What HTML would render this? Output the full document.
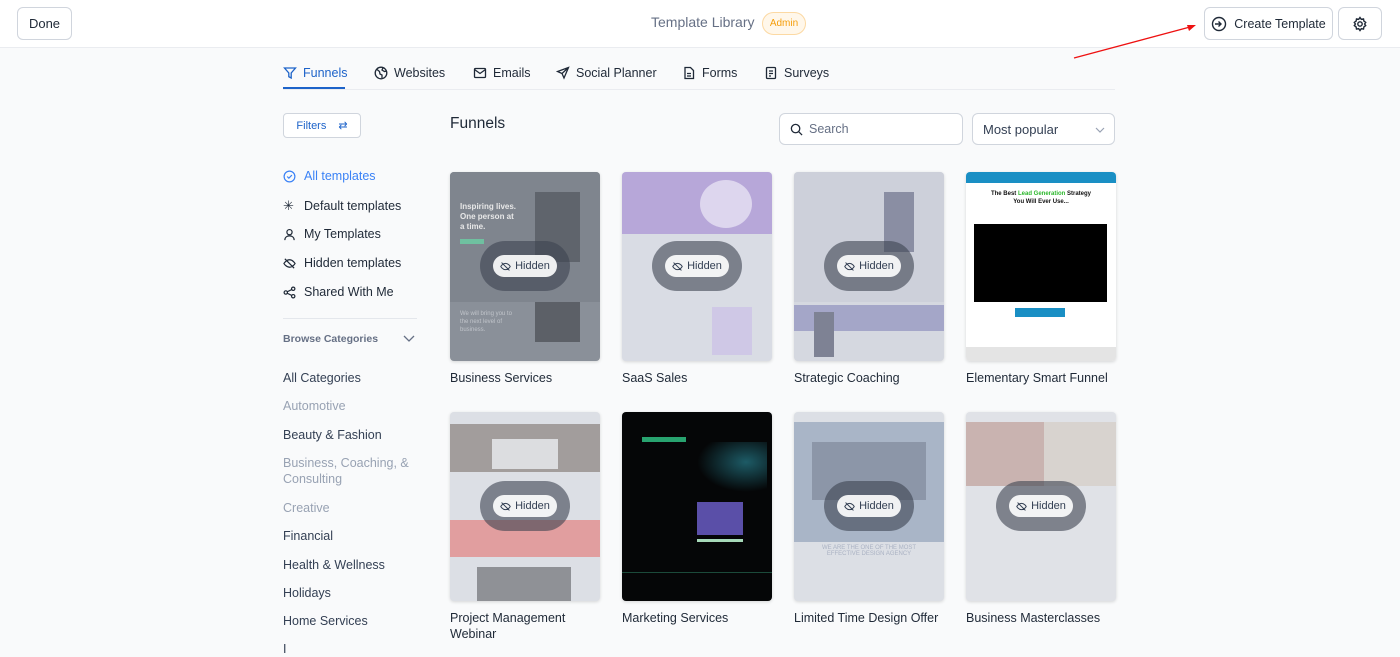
<!DOCTYPE html>
<html><head><meta charset="utf-8"><style>
*{box-sizing:border-box;margin:0;padding:0}
body{width:1400px;height:647px;overflow:hidden;background:#f9fafb;font-family:"Liberation Sans",sans-serif;color:#1f2937;position:relative}
.hdr{position:absolute;left:0;top:0;width:1400px;height:48px;background:#fff;border-bottom:1px solid #eaecf0}
.btn{position:absolute;background:#fff;border:1px solid #d0d5dd;border-radius:6px;font-size:13px;color:#1f2937;display:flex;align-items:center;justify-content:center}
.tabs{position:absolute;left:283px;top:60px;width:832px;height:30px;border-bottom:1px solid #eaecf0;font-size:12.5px}
.tab{position:absolute;top:6px;display:flex;align-items:center;gap:6px;color:#1f2937}
.nav{position:absolute;left:283px;display:flex;align-items:center;gap:8px;font-size:12.5px}
.cat{position:absolute;left:283px;font-size:12.5px;color:#344054;line-height:16px}
.cat.g{color:#98a2b3}
.card{position:absolute;width:150px;height:189px;border-radius:4px;overflow:hidden;box-shadow:0 1px 3px rgba(0,0,0,.15);background:#e4e7ec}
.ttl{position:absolute;font-size:12.5px;color:#1f2937;line-height:16px}
.ov{position:absolute;left:30px;top:69px;width:90px;height:50px;border-radius:25px;background:rgba(60,66,80,.6)}
.pill{position:absolute;left:13px;top:14px;width:64px;height:22px;border-radius:11px;background:rgba(255,255,255,.9);font-size:11px;color:#344054;display:flex;align-items:center;justify-content:center;gap:4px}
</style></head><body>
<div class="hdr"></div>
<div class="btn" style="left:17px;top:7px;width:55px;height:33px">Done</div>
<div style="position:absolute;left:651px;top:14px;font-size:14px;color:#667085">Template Library</div>
<div style="position:absolute;left:762px;top:12px;width:44px;height:23px;border:1px solid #fcd9a3;background:#fff7ea;border-radius:12px;color:#f59e0b;font-size:10px;text-align:center;line-height:21px">Admin</div>
<div class="btn" style="left:1204px;top:7px;width:129px;height:33px;gap:7px;font-size:12.5px"><svg width="16" height="16" viewBox="0 0 16 16" fill="none" stroke="#1f2937" stroke-width="1.4"><circle cx="8" cy="8" r="6.5"/><path d="M4 8h6M7.5 5.5 10 8l-2.5 2.5"/></svg>Create Template</div>
<div class="btn" style="left:1338px;top:7px;width:44px;height:33px"><svg width="16" height="16" viewBox="0 0 16 16" fill="none" stroke="#1f2937" stroke-width="1.4"><circle cx="8" cy="8" r="2.2"/><path d="M8 1.5l1.3 1.8 2.2-.4.4 2.2 1.8 1.3-1.1 1.6 1.1 1.6-1.8 1.3-.4 2.2-2.2-.4L8 14.5l-1.3-1.8-2.2.4-.4-2.2L2.3 9.6 3.4 8 2.3 6.4l1.8-1.3.4-2.2 2.2.4z"/></svg></div>
<svg style="position:absolute;left:1070px;top:20px" width="130" height="42"><line x1="4" y1="38" x2="120" y2="7" stroke="#e11" stroke-width="1.3"/><path d="M126 5l-9 0 2 6z" fill="#e11"/></svg>

<div class="tabs">
<div class="tab" style="left:0;color:#1d63c9"><svg width="14" height="14" viewBox="0 0 14 14" fill="none" stroke="#1d63c9" stroke-width="1.3"><path d="M1.5 2h11l-4.3 5v5l-2.4-1.3V7z"/></svg>Funnels</div>
<div style="position:absolute;left:0;top:27px;width:62px;height:2px;background:#1d63c9"></div>
<div class="tab" style="left:91px"><svg width="14" height="14" viewBox="0 0 14 14" fill="none" stroke="#1f2937" stroke-width="1.3"><circle cx="7" cy="7" r="5.8"/><path d="M3 3.5l2.5 2 .5 2.5 2 1v3M9 1.8 8 4l2.5 1.5 2.2-.5"/></svg>Websites</div>
<div class="tab" style="left:190px"><svg width="14" height="14" viewBox="0 0 14 14" fill="none" stroke="#1f2937" stroke-width="1.3"><rect x="1.5" y="2.5" width="11" height="9" rx="1"/><path d="M1.5 3.5 7 7.5l5.5-4"/></svg>Emails</div>
<div class="tab" style="left:273px"><svg width="14" height="14" viewBox="0 0 14 14" fill="none" stroke="#1f2937" stroke-width="1.3"><path d="M12.5 1.5 1.5 5.5l4.5 2 2 4.5zM6 7.5l6.5-6"/></svg>Social Planner</div>
<div class="tab" style="left:399px"><svg width="14" height="14" viewBox="0 0 14 14" fill="none" stroke="#1f2937" stroke-width="1.3"><path d="M3 1.5h5.5l3 3v8H3z M5 7.5h4M5 10h4"/></svg>Forms</div>
<div class="tab" style="left:481px"><svg width="14" height="14" viewBox="0 0 14 14" fill="none" stroke="#1f2937" stroke-width="1.3"><rect x="2.5" y="1.5" width="9" height="11" rx="1"/><path d="M5 5h4M5 7.5h4M5 10h2"/></svg>Surveys</div>
</div>

<div style="position:absolute;left:283px;top:113px;width:78px;height:25px;border:1px solid #d0d5dd;border-radius:4px;background:#fff;color:#1d63c9;font-size:11px;display:flex;align-items:center;justify-content:center;gap:12px">Filters <span style="font-size:11px">⇄</span></div>

<div class="nav" style="top:169px;color:#3b82f6"><svg width="13" height="13" viewBox="0 0 14 14" fill="none" stroke="#3b82f6" stroke-width="1.3"><circle cx="7" cy="7" r="5.8"/><path d="M4.5 7l1.8 1.8 3.3-3.3"/></svg>All templates</div>
<div class="nav" style="top:198px"><span style="font-size:13px;width:13px">✳</span>Default templates</div>
<div class="nav" style="top:227px"><svg width="13" height="13" viewBox="0 0 14 14" fill="none" stroke="#1f2937" stroke-width="1.3"><circle cx="7" cy="4.5" r="2.8"/><path d="M2 13c0-3 2.3-4.5 5-4.5s5 1.5 5 4.5"/></svg>My Templates</div>
<div class="nav" style="top:256px"><svg width="13" height="13" viewBox="0 0 14 14" fill="none" stroke="#1f2937" stroke-width="1.3"><path d="M1 7s2.3-4 6-4 6 4 6 4-2.3 4-6 4-6-4-6-4zM2 2l10 10"/></svg>Hidden templates</div>
<div class="nav" style="top:285px"><svg width="13" height="13" viewBox="0 0 14 14" fill="none" stroke="#1f2937" stroke-width="1.3"><circle cx="3" cy="7" r="1.8"/><circle cx="11" cy="3" r="1.8"/><circle cx="11" cy="11" r="1.8"/><path d="M4.6 6.2l4.8-2.4M4.6 7.8l4.8 2.4"/></svg>Shared With Me</div>
<div style="position:absolute;left:283px;top:318px;width:134px;height:1px;background:#e4e7ec"></div>
<div style="position:absolute;left:283px;top:333px;font-size:10.5px;font-weight:bold;color:#667085">Browse Categories</div>
<svg style="position:absolute;left:403px;top:334px" width="12" height="10"><path d="M1 2l5 5 5-5" fill="none" stroke="#667085" stroke-width="1.3"/></svg>

<div class="cat" style="top:370px">All Categories</div>
<div class="cat g" style="top:398px">Automotive</div>
<div class="cat" style="top:427px">Beauty &amp; Fashion</div>
<div class="cat g" style="top:455px">Business, Coaching, &amp;<br>Consulting</div>
<div class="cat g" style="top:500px">Creative</div>
<div class="cat" style="top:528px">Financial</div>
<div class="cat" style="top:557px">Health &amp; Wellness</div>
<div class="cat" style="top:585px">Holidays</div>
<div class="cat" style="top:613px">Home Services</div>
<div class="cat" style="top:641px">I</div>

<div style="position:absolute;left:450px;top:115px;font-size:15.5px;color:#1f2937">Funnels</div>
<div style="position:absolute;left:779px;top:113px;width:184px;height:32px;border:1px solid #d0d5dd;border-radius:6px;background:#fff;font-size:12.5px;color:#667085;display:flex;align-items:center;padding-left:10px;gap:6px"><svg width="13" height="13" viewBox="0 0 14 14" fill="none" stroke="#1f2937" stroke-width="1.4"><circle cx="6" cy="6" r="4.5"/><path d="M9.5 9.5 13 13"/></svg>Search</div>
<div style="position:absolute;left:972px;top:113px;width:143px;height:32px;border:1px solid #d0d5dd;border-radius:6px;background:#fff;font-size:13px;color:#344054;display:flex;align-items:center;padding-left:10px">Most popular<svg style="position:absolute;right:9px;top:12px" width="10" height="8"><path d="M1 2l4 4 4-4" fill="none" stroke="#98a2b3" stroke-width="1.2"/></svg></div>

<!-- row 1 -->
<div class="card" style="left:450px;top:172px;background:#8a9099">
 <div style="position:absolute;left:0;top:0;width:150px;height:130px;background:#7f858e"></div>
 <div style="position:absolute;left:10px;top:30px;color:#e8e8e8;font-size:8px;font-weight:bold;line-height:10px">Inspiring lives.<br>One person at<br>a time.</div>
 <div style="position:absolute;left:10px;top:67px;width:24px;height:5px;background:#6fc0a0"></div>
 <div style="position:absolute;left:85px;top:20px;width:45px;height:70px;background:#5f646c"></div>
 <div style="position:absolute;left:10px;top:138px;color:#c0c4ca;font-size:6px;line-height:8px">We will bring you to<br>the next level of<br>business.</div>
 <div style="position:absolute;left:85px;top:130px;width:45px;height:40px;background:#5c6067"></div>
 <div class="ov"><div class="pill"><svg width="11" height="11" viewBox="0 0 14 14" fill="none" stroke="#344054" stroke-width="1.3"><path d="M1 7s2.3-4 6-4 6 4 6 4-2.3 4-6 4-6-4-6-4zM2 2l10 10"/></svg>Hidden</div></div>
</div>
<div class="ttl" style="left:450px;top:370px">Business Services</div>

<div class="card" style="left:622px;top:172px;background:#d9dce4">
 <div style="position:absolute;left:0;top:0;width:150px;height:62px;background:#b7a7d9"></div>
 <div style="position:absolute;left:78px;top:8px;width:52px;height:48px;border-radius:50%;background:#ddd6ee"></div>
 <div style="position:absolute;left:90px;top:135px;width:40px;height:48px;background:#cfc8e6"></div>
 <div class="ov"><div class="pill"><svg width="11" height="11" viewBox="0 0 14 14" fill="none" stroke="#344054" stroke-width="1.3"><path d="M1 7s2.3-4 6-4 6 4 6 4-2.3 4-6 4-6-4-6-4zM2 2l10 10"/></svg>Hidden</div></div>
</div>
<div class="ttl" style="left:622px;top:370px">SaaS Sales</div>

<div class="card" style="left:794px;top:172px;background:#d5d8e0">
 <div style="position:absolute;left:0;top:0;width:150px;height:130px;background:#cdd0da"></div>
 <div style="position:absolute;left:90px;top:20px;width:30px;height:60px;background:#8a8ea3"></div>
 <div style="position:absolute;left:0;top:133px;width:150px;height:26px;background:#a4a6c8"></div>
 <div style="position:absolute;left:20px;top:140px;width:20px;height:45px;background:#7e8294"></div>
 <div class="ov"><div class="pill"><svg width="11" height="11" viewBox="0 0 14 14" fill="none" stroke="#344054" stroke-width="1.3"><path d="M1 7s2.3-4 6-4 6 4 6 4-2.3 4-6 4-6-4-6-4zM2 2l10 10"/></svg>Hidden</div></div>
</div>
<div class="ttl" style="left:794px;top:370px">Strategic Coaching</div>

<div class="card" style="left:966px;top:172px;background:#fff">
 <div style="position:absolute;left:0;top:0;width:150px;height:11px;background:#1a8fc4"></div>
 <div style="position:absolute;left:0;top:18px;width:150px;text-align:center;font-size:6px;font-weight:bold;line-height:8px;color:#111">The Best <span style="color:#2db82d">Lead Generation</span> Strategy<br>You Will Ever Use...</div>
 <div style="position:absolute;left:8px;top:52px;width:133px;height:78px;background:#000"></div>
 <div style="position:absolute;left:49px;top:136px;width:50px;height:9px;background:#1a8fc4"></div>
 <div style="position:absolute;left:0;top:175px;width:150px;height:14px;background:#e4e4e4"></div>
</div>
<div class="ttl" style="left:966px;top:370px">Elementary Smart Funnel</div>

<!-- row 2 -->
<div class="card" style="left:450px;top:412px;background:#dcdfe5">
 <div style="position:absolute;left:0;top:12px;width:150px;height:48px;background:#a29d9c"></div>
 <div style="position:absolute;left:42px;top:27px;width:66px;height:30px;background:#dcdde0"></div>
 <div style="position:absolute;left:0;top:108px;width:150px;height:37px;background:#e19e9f"></div>
 <div style="position:absolute;left:27px;top:155px;width:94px;height:34px;background:#8f9196"></div>
 <div class="ov"><div class="pill"><svg width="11" height="11" viewBox="0 0 14 14" fill="none" stroke="#344054" stroke-width="1.3"><path d="M1 7s2.3-4 6-4 6 4 6 4-2.3 4-6 4-6-4-6-4zM2 2l10 10"/></svg>Hidden</div></div>
</div>
<div class="ttl" style="left:450px;top:610px">Project Management<br>Webinar</div>

<div class="card" style="left:622px;top:412px;background:#050607">
 <div style="position:absolute;left:20px;top:25px;width:44px;height:5px;background:#28a36f"></div>
 <div style="position:absolute;left:75px;top:30px;width:70px;height:50px;background:radial-gradient(ellipse at 70% 40%,#1d5b66,transparent 70%)"></div>
 <div style="position:absolute;left:75px;top:90px;width:46px;height:33px;background:#5a4fa8"></div>
 <div style="position:absolute;left:75px;top:127px;width:46px;height:3px;background:#a6d9b8"></div>
 <div style="position:absolute;left:0;top:160px;width:150px;height:1px;background:#1b4a3a"></div>
</div>
<div class="ttl" style="left:622px;top:610px">Marketing Services</div>

<div class="card" style="left:794px;top:412px;background:#dcdfe5">
 <div style="position:absolute;left:0;top:10px;width:150px;height:120px;background:#a9b5c7"></div>
 <div style="position:absolute;left:18px;top:30px;width:114px;height:58px;background:#8c96a8"></div>
 <div style="position:absolute;left:20px;top:133px;width:110px;height:20px;color:#aab2c3;font-size:6px;text-align:center">WE ARE THE ONE OF THE MOST<br>EFFECTIVE DESIGN AGENCY</div>
 <div class="ov"><div class="pill"><svg width="11" height="11" viewBox="0 0 14 14" fill="none" stroke="#344054" stroke-width="1.3"><path d="M1 7s2.3-4 6-4 6 4 6 4-2.3 4-6 4-6-4-6-4zM2 2l10 10"/></svg>Hidden</div></div>
</div>
<div class="ttl" style="left:794px;top:610px">Limited Time Design Offer</div>

<div class="card" style="left:966px;top:412px;background:#e0e2e7">
 <div style="position:absolute;left:0;top:10px;width:78px;height:64px;background:#c9b3b0"></div>
 <div style="position:absolute;left:78px;top:10px;width:72px;height:64px;background:#d8d3cf"></div>
 <div class="ov"><div class="pill"><svg width="11" height="11" viewBox="0 0 14 14" fill="none" stroke="#344054" stroke-width="1.3"><path d="M1 7s2.3-4 6-4 6 4 6 4-2.3 4-6 4-6-4-6-4zM2 2l10 10"/></svg>Hidden</div></div>
</div>
<div class="ttl" style="left:966px;top:610px">Business Masterclasses</div>
</body></html>
